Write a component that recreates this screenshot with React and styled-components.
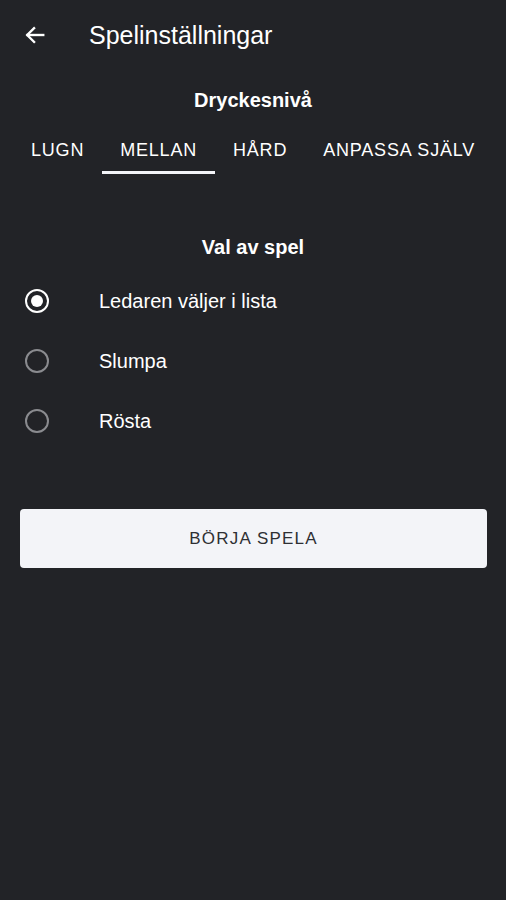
import React, { useState } from "react";
import styled, { createGlobalStyle } from "styled-components";

const Global = createGlobalStyle`
  html, body { margin: 0; padding: 0; background: #222327; }
  body { font-family: "Liberation Sans", Arial, sans-serif; color: #fff; }
`;

const Page = styled.div`
  width: 506px;
  min-height: 900px;
  background: #222327;
  display: flex;
  flex-direction: column;
`;

const Header = styled.header`
  height: 70px;
  display: flex;
  align-items: center;
  padding-left: 24px;
  gap: 43px;
`;

const BackButton = styled.button`
  background: none;
  border: 0;
  padding: 0;
  width: 22px;
  height: 22px;
  display: flex;
  align-items: center;
  justify-content: center;
  color: #fff;
`;

const Title = styled.h1`
  margin: 0;
  font-size: 25px;
  font-weight: 400;
  color: #fff;
`;

const SectionTitle = styled.h2`
  margin: ${(p) => p.$top}px 0 0;
  text-align: center;
  font-size: 20px;
  line-height: 23px;
  font-weight: 700;
  color: #fff;
`;

const Tabs = styled.div`
  display: flex;
  justify-content: center;
  margin-top: 16px;
`;

const Tab = styled.button`
  background: none;
  border: 0;
  padding: 1px 18px 0;
  height: 46px;
  font-family: inherit;
  font-size: 18px;
  letter-spacing: 0.8px;
  text-transform: uppercase;
  color: #fff;
  border-bottom: 3px solid ${(p) => (p.$active ? "#f3f4f8" : "transparent")};
  box-sizing: border-box;
  white-space: nowrap;
`;

const Options = styled.div`
  display: flex;
  flex-direction: column;
  margin-top: 12px;
`;

const OptionRow = styled.label`
  display: flex;
  align-items: center;
  height: 60px;
  padding-left: 25px;
  gap: 50px;
  font-size: 20px;
  color: #fff;
  cursor: pointer;
`;

const Radio = styled.span`
  width: 24px;
  height: 24px;
  flex: none;
  box-sizing: border-box;
  border-radius: 50%;
  border: 2px solid ${(p) => (p.$checked ? "#ffffff" : "#8a8b8f")};
  display: flex;
  align-items: center;
  justify-content: center;
  &::after {
    content: "";
    width: 12px;
    height: 12px;
    border-radius: 50%;
    background: #fff;
    display: ${(p) => (p.$checked ? "block" : "none")};
  }
`;

const StartButton = styled.button`
  margin: 58px 19px 0 20px;
  height: 59px;
  background: #f3f4f8;
  border: 0;
  border-radius: 4px;
  font-family: inherit;
  font-size: 17px;
  letter-spacing: 1.2px;
  color: #2e2f33;
`;

const levels = ["Lugn", "Mellan", "Hård", "Anpassa själv"];
const options = ["Ledaren väljer i lista", "Slumpa", "Rösta"];

export default function App() {
  const [level, setLevel] = useState(1);
  const [opt, setOpt] = useState(0);
  return (
    <Page>
      <Global />
      <Header>
        <BackButton aria-label="Tillbaka">
          <svg width="22" height="22" viewBox="0 0 24 24" fill="none" stroke="#fff" strokeWidth="2.6" strokeLinecap="square">
            <path d="M21 12H4" />
            <path d="M11 4.5 3.5 12l7.5 7.5" />
          </svg>
        </BackButton>
        <Title>Spelinställningar</Title>
      </Header>
      <SectionTitle $top={19}>Dryckesnivå</SectionTitle>
      <Tabs>
        {levels.map((l, i) => (
          <Tab key={l} $active={i === level} onClick={() => setLevel(i)}>
            {l}
          </Tab>
        ))}
      </Tabs>
      <SectionTitle $top={62}>Val av spel</SectionTitle>
      <Options>
        {options.map((o, i) => (
          <OptionRow key={o} onClick={() => setOpt(i)}>
            <Radio $checked={i === opt} />
            {o}
          </OptionRow>
        ))}
      </Options>
      <StartButton>BÖRJA SPELA</StartButton>
    </Page>
  );
}
